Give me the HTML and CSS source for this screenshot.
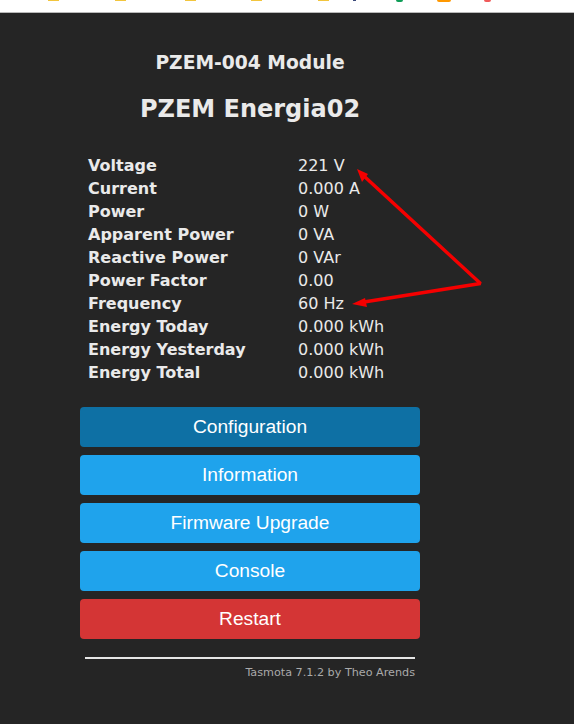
FILE: index.html
```html
<!DOCTYPE html>
<html lang="en">
<head>
  <meta charset="UTF-8" />
  <title>PZEM Energia02</title>
  <link rel="stylesheet" href="styles.css">
</head>
<body>
  <!-- bookmarks bar, cut off at the top -->
  <div class="barra">
    <span class="marca marca-a"></span>
    <span class="marca marca-b"></span>
    <span class="marca marca-c"></span>
    <span class="marca marca-d"></span>
    <span class="marca marca-e"></span>
    <span class="marca marca-f"></span>
    <span class="marca marca-g"></span>
    <span class="marca marca-h"></span>
    <span class="marca marca-i"></span>
  </div>

  <div class="pagina">
    <div class="contenedor">
      <h3 class="modulo">PZEM-004 Module</h3>
      <h2 class="nombre">PZEM Energia02</h2>

      <table class="datos">
        <tr><th>Voltage</th><td>221 V</td></tr>
        <tr><th>Current</th><td>0.000 A</td></tr>
        <tr><th>Power</th><td>0 W</td></tr>
        <tr><th>Apparent Power</th><td>0 VA</td></tr>
        <tr><th>Reactive Power</th><td>0 VAr</td></tr>
        <tr><th>Power Factor</th><td>0.00</td></tr>
        <tr><th>Frequency</th><td>60 Hz</td></tr>
        <tr><th>Energy Today</th><td>0.000 kWh</td></tr>
        <tr><th>Energy Yesterday</th><td>0.000 kWh</td></tr>
        <tr><th>Energy Total</th><td>0.000 kWh</td></tr>
      </table>

      <div class="botones">
        <button class="boton boton-activo">Configuration</button>
        <button class="boton">Information</button>
        <button class="boton">Firmware Upgrade</button>
        <button class="boton">Console</button>
        <button class="boton boton-rojo">Restart</button>
      </div>

      <div class="pie">
        <hr class="linea">
        <p class="version">Tasmota 7.1.2 by Theo Arends</p>
      </div>
    </div>
  </div>

  <!-- red arrows drawn over the screenshot -->
  <svg class="flechas" width="574" height="724" viewBox="0 0 574 724">
    <path d="M365 177 L480.5 283.5 L364 302" stroke="#f50000" stroke-width="3.4" stroke-linejoin="bevel" fill="none"/>
    <path d="M357 169 L368 174 L362 182 Z" fill="#f50000"/>
    <path d="M352 304 L365 298 L367 307 Z" fill="#f50000"/>
  </svg>
</body>
</html>
```

FILE: styles.css
```css
* {
  box-sizing: border-box;
  margin: 0;
  padding: 0;
}
html, body {
  height: 100%;
  overflow: hidden;
}
body {
  display: flex;
  flex-direction: column;
  background: #252525;
  color: #eaeaea;
  font-family: "DejaVu Sans", Verdana, sans-serif;
}
.barra {
  position: relative;
  height: 13px;
  background: #fff;
  border-bottom: 1px solid #b9b9b9;
}
.marca {
  position: absolute;
  top: 0;
  height: 1px;
}
.marca-a { left: 48px; width: 11px; background: #f2c53d; }
.marca-b { left: 115px; width: 11px; background: #f2c53d; }
.marca-c { left: 185px; width: 11px; background: #f2c53d; }
.marca-d { left: 251px; width: 11px; background: #f2c53d; }
.marca-e { left: 318px; width: 11px; background: #f2c53d; }
.marca-f { left: 353px; width: 3px; background: #3b4a7a; }
.marca-g { left: 396px; width: 7px; height: 2px; background: #0f9d58; border-radius: 0 0 3px 3px; }
.marca-h { left: 437px; width: 14px; height: 2px; background: #ff9800; border-radius: 0 0 3px 3px; }
.marca-i { left: 484px; width: 7px; height: 2px; background: #f05a5a; border-radius: 0 0 3px 3px; }
.pagina {
  flex: 1;
  padding-left: 80px;
}
.contenedor {
  width: 340px;
}
.modulo {
  margin-top: 39px;
  font-size: 18.72px;
  line-height: 21px;
  text-align: center;
  font-weight: bold;
}
.nombre {
  margin-top: 22px;
  font-size: 24px;
  line-height: 28px;
  text-align: center;
  font-weight: bold;
}
.datos {
  margin: 31px 0 0 8px;
  border-collapse: collapse;
  font-size: 16px;
}
.datos th {
  width: 210px;
  height: 23px;
  padding: 0;
  text-align: left;
  font-weight: bold;
}
.datos td {
  height: 23px;
  padding: 0;
}
.botones {
  display: flex;
  flex-direction: column;
  gap: 8px;
  margin-top: 23px;
}
.boton {
  height: 40px;
  border: 0;
  border-radius: 4px;
  background: #1fa3ec;
  color: #fff;
  font-family: "Liberation Sans", Arial, sans-serif;
  font-size: 19.2px;
  cursor: pointer;
}
.boton-activo {
  background: #0e70a4;
}
.boton-rojo {
  background: #d43535;
}
.pie {
  margin: 18px 5px 0;
}
.linea {
  border: 0;
  border-top: 2px solid #e6e6e6;
}
.version {
  margin-top: 7px;
  font-size: 11.2px;
  line-height: 14px;
  text-align: right;
  color: #aaa;
}
.flechas {
  position: absolute;
  top: 0;
  left: 0;
  pointer-events: none;
}
```
